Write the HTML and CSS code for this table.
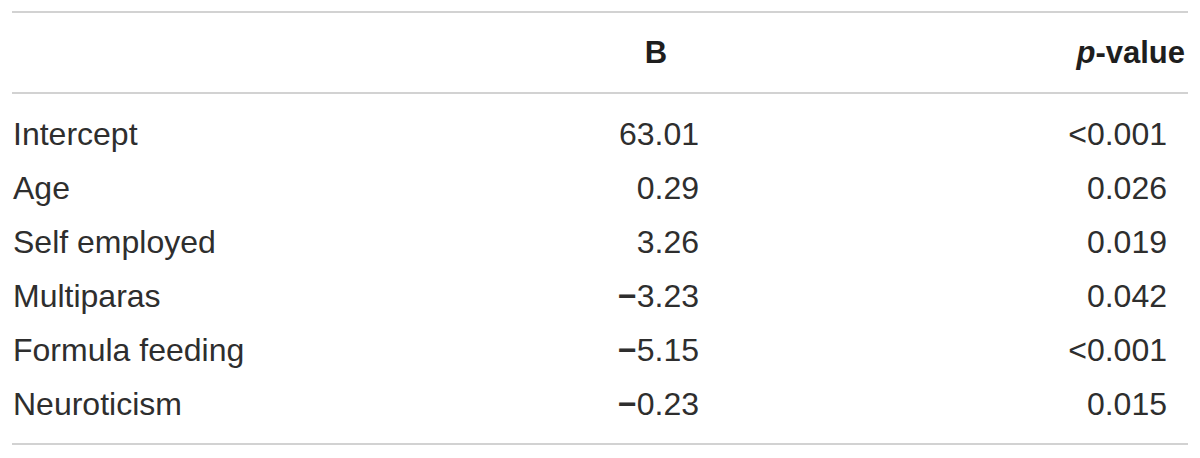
FILE: index.html
```html
<!DOCTYPE html>
<html>
<head>
<meta charset="utf-8">
<link rel="stylesheet" href="styles.css">
</head>
<body>
<div class="table">
  <div class="head">
    <div class="cell label"></div>
    <div class="cell bcol hb">B</div>
    <div class="cell pcol hp"><i>p</i>-value</div>
  </div>
  <div class="body">
    <div class="row"><div class="cell label">Intercept</div><div class="cell bcol">63.01</div><div class="cell pcol">&lt;0.001</div></div>
    <div class="row"><div class="cell label">Age</div><div class="cell bcol">0.29</div><div class="cell pcol">0.026</div></div>
    <div class="row"><div class="cell label">Self employed</div><div class="cell bcol">3.26</div><div class="cell pcol">0.019</div></div>
    <div class="row"><div class="cell label">Multiparas</div><div class="cell bcol"><span class="minus">−</span>3.23</div><div class="cell pcol">0.042</div></div>
    <div class="row"><div class="cell label">Formula feeding</div><div class="cell bcol"><span class="minus">−</span>5.15</div><div class="cell pcol">&lt;0.001</div></div>
    <div class="row"><div class="cell label">Neuroticism</div><div class="cell bcol"><span class="minus">−</span>0.23</div><div class="cell pcol">0.015</div></div>
  </div>
</div>
</body>
</html>
```
FILE: styles.css
```css
html, body {
  margin: 0;
  padding: 0;
  background: #ffffff;
}
body {
  padding: 11px 12px 0 12px;
  font-family: "Liberation Sans", Arial, sans-serif;
  font-size: 32px;
  color: #2e2e2e;
}
.table {
  border-top: 2px solid #d2d2d2;
  border-bottom: 2px solid #d2d2d2;
}
.head {
  display: grid;
  grid-template-columns: 600px 88px 1fr;
  height: 79px;
  align-items: center;
  border-bottom: 2px solid #d2d2d2;
  font-weight: bold;
  font-size: 31px;
  color: #1e1e1e;
}
.body {
  padding: 13px 0 12px 0;
}
.row {
  display: grid;
  grid-template-columns: 600px 88px 1fr;
  height: 54px;
  align-items: center;
}
.cell {
  line-height: 1;
  white-space: nowrap;
}
.label {
  padding-left: 1px;
}
.bcol {
  text-align: right;
  padding-right: 1px;
}
.hb {
  text-align: center;
  padding-right: 0;
}
.pcol {
  text-align: right;
  padding-right: 21px;
}
.hp {
  padding-right: 3px;
}
.minus {
  font-weight: bold;
}
```
